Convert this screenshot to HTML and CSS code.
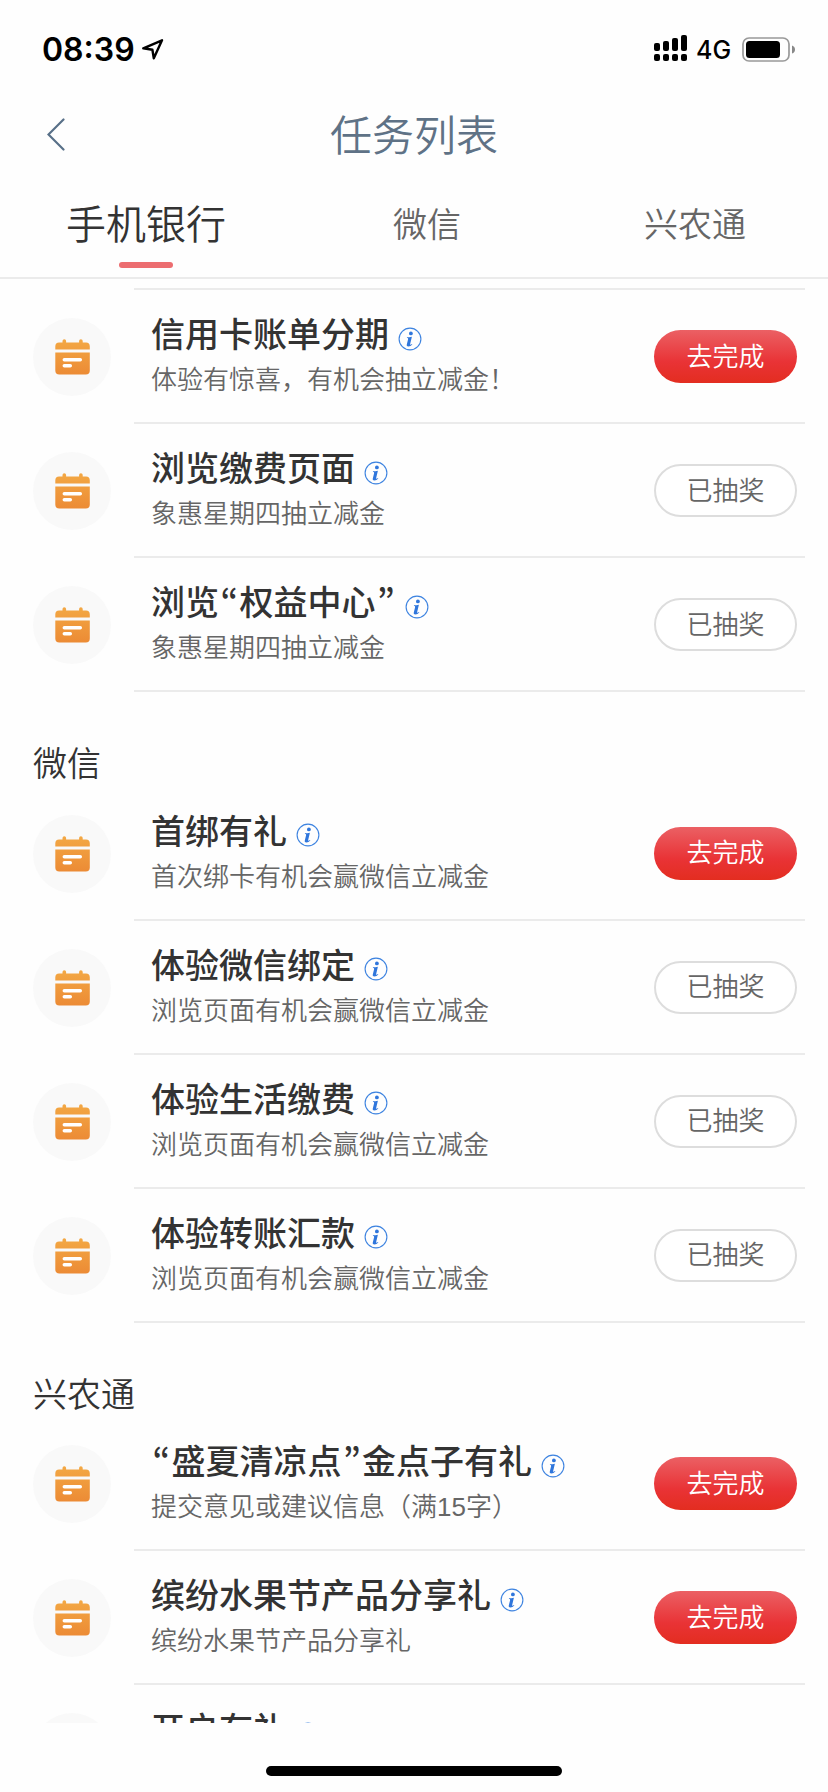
FILE: index.html
```html
<!DOCTYPE html>
<html lang="zh-CN">
<head>
<meta charset="utf-8">
<title>任务列表</title>
<link rel="stylesheet" href="styles.css">
</head>
<body>
<svg class="defs" width="0" height="0">
  <defs>
    <linearGradient id="orange" x1="0" y1="0" x2="0" y2="1"><stop offset="0" stop-color="#f3a844"/><stop offset="1" stop-color="#ec8b35"/></linearGradient>
    <symbol id="calendar" viewBox="0 0 35 36">
      <path fill="url(#orange)" d="M7.500 2a1.800 1.800 0 0 1 3.600 0v1.600h13V2a1.800 1.800 0 0 1 3.600 0v1.600H31a3.800 3.800 0 0 1 3.800 3.800v3H.3v-3A3.800 3.800 0 0 1 4.100 3.600h3.400zM.3 13.400h34.500v18a4 4 0 0 1-4 4H4.300a4 4 0 0 1-4-4z"/>
      <path stroke="#fff" stroke-width="3.500" stroke-linecap="round" d="M9.300 20.700h16M9.300 26.700h6"/>
    </symbol>
    <symbol id="info" viewBox="0 0 24 24">
      <circle cx="12" cy="12" r="10.900" fill="none" stroke="#3d83e0" stroke-width="1.100"/>
      <circle cx="12.900" cy="6.400" r="1.900" fill="#2f76dc"/>
      <path fill="#2f76dc" d="M9 10.300c1.900 0 3-.2 4.900-.6l-1.800 7.500c-.2.900.7.700 1.900-.2l.3.500c-1.300 1.300-2.400 1.900-3.800 1.900-1.500 0-2-.8-1.700-2l1.300-5.200c.2-.9-.2-1.100-1.200-1.200z"/>
    </symbol>
  </defs>
</svg>
<div class="screen">
  <header class="status">
    <span class="time">08:39</span>
    <svg class="arrow" width="22" height="21" viewBox="0 0 22 21"><path d="M1.300 9.300 20 1.300 11.800 19.300 10.400 10.800z" fill="none" stroke="#000" stroke-width="2.400" stroke-linejoin="round"/></svg>
    <svg class="signal" width="34" height="27" viewBox="0 0 34 27"><rect x="0" y="8" width="6" height="8" rx="2"/><rect x="9" y="6" width="6" height="10" rx="2"/><rect x="18" y="3" width="6" height="13" rx="2"/><rect x="27" y="0" width="6" height="16" rx="2"/><rect x="0" y="19" width="6" height="7" rx="2"/><rect x="9" y="19" width="6" height="7" rx="2"/><rect x="18" y="19" width="6" height="7" rx="2"/><rect x="27" y="19" width="6" height="7" rx="2"/></svg>
    <span class="net">4G</span>
    <svg class="battery" width="54" height="25" viewBox="0 0 54 25"><rect x="1" y="1" width="46" height="23" rx="6" fill="none" stroke="#999" stroke-width="1.700"/><rect x="4" y="4" width="34" height="17" rx="3.500"/><path d="M50 8.500q3 1 3 4t-3 4z" fill="#888"/></svg>
  </header>
  <div class="nav">
    <svg class="back" width="18" height="34" viewBox="0 0 18 34"><path d="M16.500 1.500 1.500 16.500 16.500 31.500" fill="none" stroke="#587088" stroke-width="2.200" stroke-linecap="round"/></svg>
    <h1>任务列表</h1>
  </div>
  <nav class="tabs">
    <a class="tab active">手机银行</a>
    <a class="tab middle">微信</a>
    <a class="tab">兴农通</a>
  </nav>
  <main class="list">
    <hr>
    <article class="task"><div class="badge"><svg><use href="#calendar"/></svg></div><div class="body"><div class="text"><h3>信用卡账单分期<svg><use href="#info"/></svg></h3><p>体验有惊喜，有机会抽立减金！</p></div><button class="go">去完成</button></div></article>
    <article class="task"><div class="badge"><svg><use href="#calendar"/></svg></div><div class="body"><div class="text"><h3>浏览缴费页面<svg><use href="#info"/></svg></h3><p>象惠星期四抽立减金</p></div><button class="done">已抽奖</button></div></article>
    <article class="task"><div class="badge"><svg><use href="#calendar"/></svg></div><div class="body"><div class="text"><h3>浏览<i>“</i>权益中心<i>”</i><svg><use href="#info"/></svg></h3><p>象惠星期四抽立减金</p></div><button class="done">已抽奖</button></div></article>
    <h2>微信</h2>
    <article class="task"><div class="badge"><svg><use href="#calendar"/></svg></div><div class="body"><div class="text"><h3>首绑有礼<svg><use href="#info"/></svg></h3><p>首次绑卡有机会赢微信立减金</p></div><button class="go">去完成</button></div></article>
    <article class="task"><div class="badge"><svg><use href="#calendar"/></svg></div><div class="body"><div class="text"><h3>体验微信绑定<svg><use href="#info"/></svg></h3><p>浏览页面有机会赢微信立减金</p></div><button class="done">已抽奖</button></div></article>
    <article class="task"><div class="badge"><svg><use href="#calendar"/></svg></div><div class="body"><div class="text"><h3>体验生活缴费<svg><use href="#info"/></svg></h3><p>浏览页面有机会赢微信立减金</p></div><button class="done">已抽奖</button></div></article>
    <article class="task"><div class="badge"><svg><use href="#calendar"/></svg></div><div class="body"><div class="text"><h3>体验转账汇款<svg><use href="#info"/></svg></h3><p>浏览页面有机会赢微信立减金</p></div><button class="done">已抽奖</button></div></article>
    <h2>兴农通</h2>
    <article class="task"><div class="badge"><svg><use href="#calendar"/></svg></div><div class="body"><div class="text"><h3><i>“</i>盛夏清凉点<i>”</i>金点子有礼<svg><use href="#info"/></svg></h3><p>提交意见或建议信息（满15字）</p></div><button class="go">去完成</button></div></article>
    <article class="task"><div class="badge"><svg><use href="#calendar"/></svg></div><div class="body"><div class="text"><h3>缤纷水果节产品分享礼<svg><use href="#info"/></svg></h3><p>缤纷水果节产品分享礼</p></div><button class="go">去完成</button></div></article>
    <article class="task"><div class="badge"><svg><use href="#calendar"/></svg></div><div class="body"><div class="text"><h3>开户有礼<svg><use href="#info"/></svg></h3></div></div></article>
  </main>
  <footer class="home"><span></span></footer>
</div>
</body>
</html>
```
FILE: styles.css
```css
* { box-sizing: border-box; margin: 0; padding: 0; }
body { background: #fefefe; font-family: "Liberation Sans", "Noto Sans CJK SC", sans-serif; color: #333; }
.defs { display: block; position: absolute; }
.screen { width: 828px; height: 1792px; display: flex; flex-direction: column; overflow: hidden; }
.status { height: 96px; padding: 0 32px 0 42px; display: flex; align-items: center; flex: none; color: #000; }
.time { font: 600 32px/40px Inter, sans-serif; padding-top: 4px; width: 100px; white-space: nowrap; }
.arrow { margin-top: 3px; }
.signal { margin-left: auto; }
.net { font: 500 25px/30px Inter, sans-serif; margin-left: 8px; width: 46px; padding-top: 4px; white-space: nowrap; }
.battery { margin-top: 3px; }
.nav { height: 78px; flex: none; display: grid; grid-template-columns: 48px 1fr 48px; align-items: center; }
.back { margin-left: 47px; }
.nav h1 { font-size: 42px; line-height: 78px; padding-top: 2px; height: 78px; font-weight: 350; text-align: center; color: #5f7286; }
.tabs { height: 105px; flex: none; display: flex; justify-content: space-between; padding: 19px 82px 0 66px; border-bottom: 2px solid #ebebeb; }
.tab { font-size: 34px; line-height: 64px; height: 75px; font-weight: 350; color: #666; }
.tab.middle { margin: 0 8px 0 -8px; }
.tab.active { font-size: 40px; color: #333; display: flex; flex-direction: column; align-items: center; }
.tab.active::after { content: ""; width: 54px; height: 6px; border-radius: 3px; background: #ec6d70; margin-top: 5px; flex: none; }
.list { height: 1444px; flex: none; overflow: hidden; padding-top: 9px; }
.list hr { border: 0; height: 2px; margin: 0 23px 0 134px; background: #ebebeb; }
.task { height: 134px; display: flex; padding: 0 23px 0 33px; }
.badge { width: 78px; height: 78px; margin: 28px 23px 0 0; border-radius: 50%; background: #f9f9f9; display: grid; place-items: center; flex: none; }
.badge svg { width: 35px; height: 36px; }
.body { flex: 1; border-bottom: 2px solid #ebebeb; display: flex; padding: 0 8px 0 17px; justify-content: space-between; }
.text { padding-top: 22px; white-space: nowrap; }
.text h3 { font-size: 34px; line-height: 46px; font-weight: 500; display: flex; align-items: center; }
.text h3 svg { width: 24px; height: 24px; margin: 7px 0 0 9px; }
.text h3 i { font-style: normal; font-family: "Noto Sans CJK SC", sans-serif; font-feature-settings: "pwid"; width: 20.500px; display: flex; justify-content: center; }
.text p { font-size: 26px; line-height: 38px; margin-top: 3px; font-weight: 350; color: #666; }
button { width: 143px; height: 53px; margin-top: 40px; border-radius: 27px; font: 350 26px/1 "Liberation Sans", "Noto Sans CJK SC", sans-serif; flex: none; }
.go { border: 0; color: #fff; background: linear-gradient(#eb6064, #e93336 60%, #e32d20); }
.done { color: #666; border: 2px solid #ddd; background: #fff; }
h2 { font-size: 34px; line-height: 50px; font-weight: 350; height: 94.500px; padding: 47px 0 0 33px; }
.home { flex: 1; display: flex; justify-content: center; padding-top: 43px; }
.home span { width: 296px; height: 10px; border-radius: 5px; background: #000; }
```
